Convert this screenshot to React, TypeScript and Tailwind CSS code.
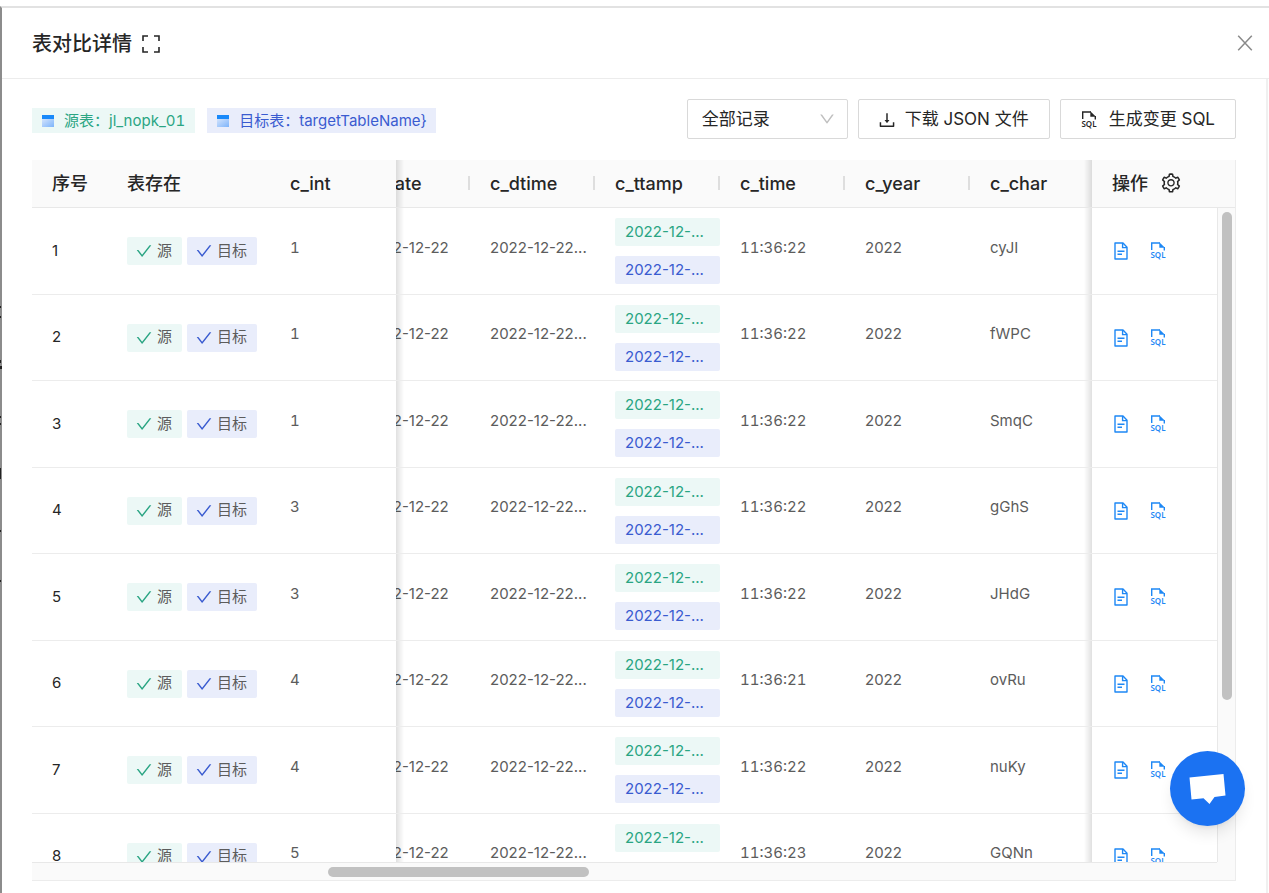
import { useLayoutEffect, useRef } from "react";
import { AiOutlineCheck, AiOutlineDown, AiOutlineDownload, AiOutlineSetting } from "react-icons/ai";
import clsx from "clsx";

type Row = {
  id: number;
  int: number;
  time: string;
  char: string;
};

const rows: Row[] = [
  { id: 1, int: 1, time: "11:36:22", char: "cyJI" },
  { id: 2, int: 1, time: "11:36:22", char: "fWPC" },
  { id: 3, int: 1, time: "11:36:22", char: "SmqC" },
  { id: 4, int: 3, time: "11:36:22", char: "gGhS" },
  { id: 5, int: 3, time: "11:36:22", char: "JHdG" },
  { id: 6, int: 4, time: "11:36:21", char: "ovRu" },
  { id: 7, int: 4, time: "11:36:22", char: "nuKy" },
  { id: 8, int: 5, time: "11:36:23", char: "GQNn" },
];

const scrollColumns = ["c_date", "c_dtime", "c_ttamp", "c_time", "c_year", "c_char"];

const leftShadow =
  "after:absolute after:inset-y-0 after:left-full after:w-2 after:bg-linear-to-r after:from-black/12 after:to-transparent";
const rightShadow =
  "after:absolute after:inset-y-0 after:right-full after:w-2 after:bg-linear-to-l after:from-black/12 after:to-transparent";

function FullscreenIcon() {
  return (
    <svg width="18" height="18" viewBox="0 0 18 18" fill="none" stroke="currentColor" strokeWidth="1.6">
      <path d="M1 6V1h5M12 1h5v5M17 12v5h-5M6 17H1v-5" />
    </svg>
  );
}

function CloseIcon() {
  return (
    <svg width="16" height="16" viewBox="0 0 16 16" fill="none" stroke="currentColor" strokeWidth="1.5">
      <path d="M1.2 0.8 14.8 15.2M14.8 0.8 1.2 15.2" />
    </svg>
  );
}

function TableIcon() {
  return (
    <svg width="12" height="12" viewBox="0 0 12 12">
      <defs>
        <linearGradient id="rowsFill" x1="0" y1="0" x2="1" y2="1">
          <stop offset="0" stopColor="#d3e3fc" />
          <stop offset="1" stopColor="#7db4fb" />
        </linearGradient>
      </defs>
      <rect width="12" height="4" fill="#1989fa" />
      <rect y="4" width="12" height="8" fill="url(#rowsFill)" />
    </svg>
  );
}

function SqlIcon() {
  return (
    <svg width="16" height="18" viewBox="0 0 16 18" fill="none" stroke="currentColor" strokeWidth="1.4">
      <path d="M1.7 8V1H10" />
      <path d="M14.3 5v3.5" />
      <path d="M9.3 0.3 15 5.8H9.3Z" fill="currentColor" stroke="none" />
      <text
        x="8"
        y="15.6"
        textAnchor="middle"
        fill="currentColor"
        stroke="none"
        fontSize="8"
        fontWeight="600"
        fontFamily="Noto Sans, sans-serif"
      >
        SQL
      </text>
    </svg>
  );
}

function FileIcon() {
  return (
    <svg width="14" height="18" viewBox="0 0 14 18" fill="none" stroke="currentColor" strokeWidth="1.4">
      <path d="M1 1h8l4 4.2V17H1Z" strokeLinejoin="round" />
      <path d="M8.6 1v4.6H13" />
      <path d="M3.5 9.2h7M3.5 12.2h4.5" />
    </svg>
  );
}

function ExistTag({ label, target }: { label: string; target?: boolean }) {
  return (
    <span
      className={clsx(
        "flex h-7 items-center gap-1 rounded-xs pr-2.5 pl-2 text-[15px] text-[#5c5c5c]",
        target ? "bg-[#e9edfb]" : "bg-[#ecf8f6]"
      )}
    >
      <AiOutlineCheck className={clsx("size-[18px]", target ? "text-[#3a5bd0]" : "text-[#2aa583]")} />
      {label}
    </span>
  );
}

function Value({ children }: { children: React.ReactNode }) {
  return <div className="pb-1.5 whitespace-nowrap">{children}</div>;
}

export default function App() {
  const scroller = useRef<HTMLDivElement>(null);

  useLayoutEffect(() => {
    if (scroller.current) scroller.current.scrollLeft = 51;
  }, []);

  return (
    <div className="flex h-screen flex-col bg-white pt-1.5 font-[Inter,'Noto_Sans_CJK_SC',sans-serif] text-[#262626]">
      <div className="relative flex min-h-0 flex-1 flex-col border-t-2 border-l-2 border-t-[#e2e2e2] border-l-[#8c8c8c]">
        {/* bits of the page under the drawer */}
        <svg className="absolute top-[291px] -left-0.5" width="2" height="300" fill="#222">
          <path d="M0 7h1v2H0zM0 17h1v2H0zM0 61h1v3H0zM0 67h2v3H0zM0 117h1v2H0zM0 124h1v2H0zM0 169h1v11H0zM0 231h1v2H0zM0 281h1v2H0z" />
        </svg>

        <header className="flex h-[71px] shrink-0 items-center justify-between border-b border-[#ececec] pr-4 pl-[30px]">
          <h1 className="flex items-center gap-2.5 pt-0.5 text-xl font-medium">
            表对比详情
            <button aria-label="全屏">
              <FullscreenIcon />
            </button>
          </h1>
          <button aria-label="关闭" className="text-[#8a8a8a]">
            <CloseIcon />
          </button>
        </header>

        <main className="mr-px flex min-h-0 flex-1 flex-col border-r-2 border-[#f0f0f0] pt-5 pr-[30px] pb-3 pl-[30px]">
          <div className="flex shrink-0 items-center justify-between pb-[21px]">
            <div className="flex gap-3 pt-0.5 text-[15px] leading-6 tabular-nums">
              <span className="flex h-[25px] items-center gap-2.5 bg-[#ecf8f6] px-2.5 pt-px text-[#2aa583]">
                <TableIcon />
                <span>源表：jl_nopk_01</span>
              </span>
              <span className="flex h-[25px] items-center gap-2.5 bg-[#e9edfb] px-2.5 pt-px text-[#3a5bd0]">
                <TableIcon />
                <span>目标表：targetTableName&#125;</span>
              </span>
            </div>
            <div className="flex gap-2.5 text-[17px]">
              <div className="relative">
                <select
                  aria-label="记录范围"
                  className="h-10 w-[161px] appearance-none rounded-xs border border-[#d9d9d9] bg-white px-3.5 pt-0.5"
                >
                  <option>全部记录</option>
                </select>
                <AiOutlineDown className="pointer-events-none absolute top-[11px] right-3 size-[18px] text-[#bfbfbf]" />
              </div>
              <button className="flex h-10 items-center gap-2 rounded-xs border border-[#d9d9d9] pr-5 pl-[18px] pt-0.5">
                <AiOutlineDownload className="size-5" />
                下载 JSON 文件
              </button>
              <button className="flex h-10 items-center gap-3 rounded-xs border border-[#d9d9d9] px-5 pt-0.5">
                <SqlIcon />
                生成变更 SQL
              </button>
            </div>
          </div>

          <div className="flex min-h-0 flex-1 border-r border-b border-[#ececec]">
            <div className="flex min-w-0 flex-1 flex-col">
              <div ref={scroller} className="min-h-0 flex-1 overflow-auto [scrollbar-width:none]">
                <table className="w-[1239px] min-w-full table-fixed border-separate border-spacing-0 text-left">
                  <colgroup>
                    <col className="w-[75px]" />
                    <col className="w-[163px]" />
                    <col className="w-[126px]" />
                    <col className="w-[125px]" />
                    <col className="w-[125px]" />
                    <col className="w-[125px]" />
                    <col className="w-[125px]" />
                    <col className="w-[125px]" />
                    <col className="w-[125px]" />
                    <col className="w-[125px]" />
                  </colgroup>
                  <thead>
                    <tr className="h-12 text-lg [&>th]:sticky [&>th]:top-0 [&>th]:border-b [&>th]:border-[#e8e8e8] [&>th]:bg-[#fafafa] [&>th]:py-0 [&>th]:pl-5 [&>th]:font-medium">
                      <th className="left-0 z-30">序号</th>
                      <th className="left-[75px] z-30">表存在</th>
                      <th className={clsx("left-[238px] z-30", leftShadow)}>c_int</th>
                      {scrollColumns.map((name) => (
                        <th
                          key={name}
                          className="z-20 before:absolute before:top-4 before:right-0 before:h-3.5 before:w-0.5 before:bg-[#dedede]"
                        >
                          {name}
                        </th>
                      ))}
                      <th className={clsx("right-0 z-30", rightShadow)}>
                        <div className="flex items-center gap-3">
                          操作
                          <button aria-label="列设置" className="pb-0.5">
                            <AiOutlineSetting className="size-[22px]" />
                          </button>
                        </div>
                      </th>
                    </tr>
                  </thead>
                  <tbody className="text-[15px] text-[#5c5c5c]">
                    {rows.map((row) => (
                      <tr
                        key={row.id}
                        className="odd:h-[87px] even:h-[86px] [&>td]:border-b [&>td]:border-[#ececec] [&>td]:py-0 [&>td]:pl-5"
                      >
                        <td className="sticky left-0 z-10 bg-white text-[#262626]">{row.id}</td>
                        <td className="sticky left-[75px] z-10 bg-white">
                          <div className="flex gap-[5px]">
                            <ExistTag label="源" />
                            <ExistTag label="目标" target />
                          </div>
                        </td>
                        <td className={clsx("sticky left-[238px] z-10 bg-white tabular-nums", leftShadow)}>
                          <Value>{row.int}</Value>
                        </td>
                        <td>
                          <Value>2022-12-22</Value>
                        </td>
                        <td>
                          <Value>2022-12-22...</Value>
                        </td>
                        <td>
                          <div className="flex flex-col gap-2.5">
                            <span className="h-7 rounded-xs bg-[#ecf8f6] pl-2.5 leading-7 text-[#2aa583]">
                              2022-12-...
                            </span>
                            <span className="h-7 rounded-xs bg-[#e9edfb] pl-2.5 leading-7 text-[#3a5bd0]">
                              2022-12-...
                            </span>
                          </div>
                        </td>
                        <td className="tabular-nums">
                          <Value>{row.time}</Value>
                        </td>
                        <td>
                          <Value>2022</Value>
                        </td>
                        <td>
                          <Value>{row.char}</Value>
                        </td>
                        <td className={clsx("sticky right-0 z-10 bg-white", rightShadow)}>
                          <div className="flex items-center gap-[22px] pl-0.5 text-[#1e88f5]">
                            <button aria-label="查看详情">
                              <FileIcon />
                            </button>
                            <button aria-label="生成 SQL">
                              <SqlIcon />
                            </button>
                          </div>
                        </td>
                      </tr>
                    ))}
                  </tbody>
                </table>
              </div>
              <div className="flex h-[18px] shrink-0 items-center border-t border-[#e8e8e8] bg-[#fafafa]">
                <div className="ml-[25%] h-2.5 w-[22%] rounded-full bg-[#c1c1c1]" />
              </div>
            </div>
            <div className="flex w-[18px] shrink-0 flex-col bg-[#fafafa]">
              <div className="h-12 shrink-0 border-b border-[#e8e8e8]" />
              <div className="flex min-h-0 flex-1 justify-center border-l border-[#e8e8e8] pt-1">
                <div className="h-[75%] w-2.5 rounded-full bg-[#c1c1c1]" />
              </div>
              <div className="h-[18px] shrink-0" />
            </div>
          </div>
        </main>
      </div>

      <button
        aria-label="在线咨询"
        className="fixed right-6 bottom-[67px] z-40 flex size-[75px] items-center justify-center rounded-full bg-[#1b72f2] shadow-lg shadow-black/10"
      >
        <svg width="37" height="32" viewBox="0 0 37 32" fill="#fff">
          <path d="M0.5 4.5 34.5 1 36.5 22.5 25.5 24 20.5 31 14.5 25.3 2.5 26.5Z" />
        </svg>
      </button>
    </div>
  );
}
